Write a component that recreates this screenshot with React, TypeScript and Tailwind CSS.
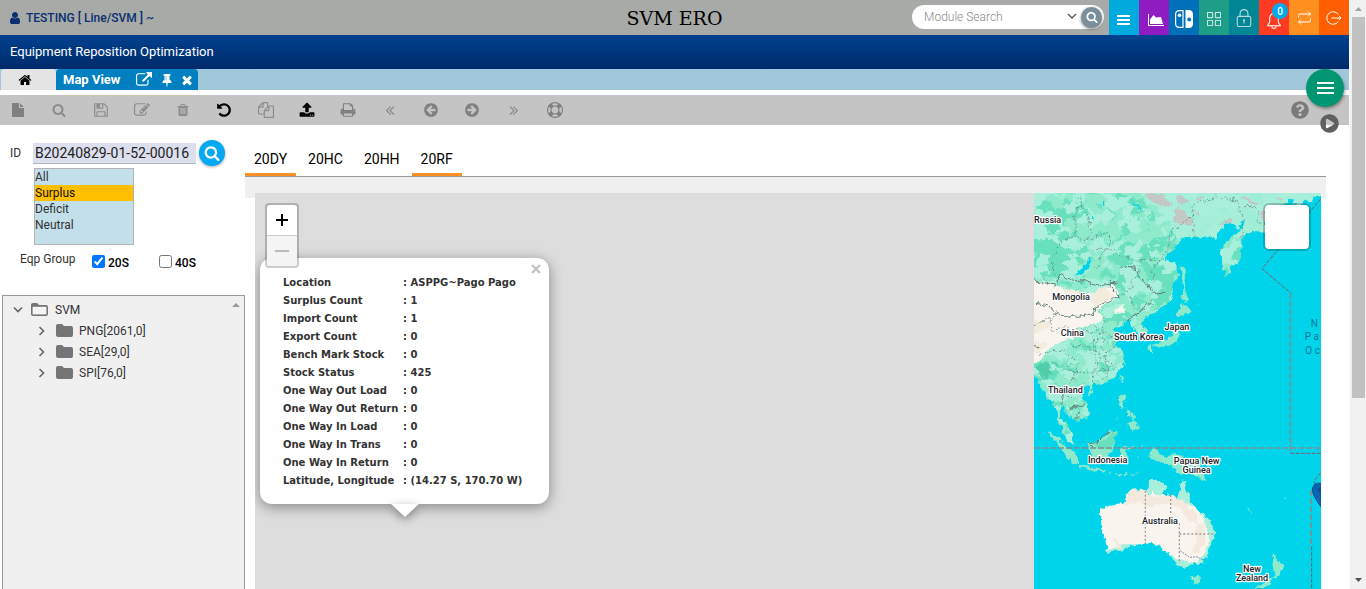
import React from "react";
import { SlGrid, SlLock, SlBell } from "react-icons/sl";
import { FaPlayCircle, FaQuestionCircle } from "react-icons/fa";

const glyphs = {
  user: "M1536 1399q0 109-62.500 187t-150.500 78h-854q-88 0-150.500-78t-62.500-187q0-85 8.500-160.500t31.500-152 58.500-131 94-89 134.500-34.500q131 128 313 128t313-128q76 0 134.500 34.500t94 89 58.500 131 31.500 152 8.500 160.500zm-256-887q0 159-112.500 271.500t-271.500 112.500-271.500-112.500-112.500-271.500 112.500-271.500 271.500-112.500 271.500 112.500 112.500 271.500z",
  home: "M1472 992v480q0 26-19 45t-45 19h-384v-384h-256v384h-384q-26 0-45-19t-19-45v-480q0-1 .5-3t.5-3l575-474 575 474q1 2 1 6zm223-69l-62 74q-8 9-21 11h-3q-13 0-21-7l-692-577-692 577q-12 8-24 7-13-2-21-11l-62-74q-8-10-7-23.500t11-21.500l719-599q32-26 76-26t76 26l244 204v-195q0-14 9-23t23-9h192q14 0 23 9t9 23v408l219 182q10 8 11 21.500t-7 23.500z",
  external: "M1408 928v320q0 119-84.500 203.500t-203.500 84.500h-832q-119 0-203.500-84.500t-84.500-203.500v-832q0-119 84.500-203.500t203.500-84.500h704q14 0 23 9t9 23v64q0 14-9 23t-23 9h-704q-66 0-113 47t-47 113v832q0 66 47 113t113 47h832q66 0 113-47t47-113v-320q0-14 9-23t23-9h64q14 0 23 9t9 23zm384-864v512q0 26-19 45t-45 19-45-19l-176-176-652 652q-10 10-23 10t-23-10l-114-114q-10-10-10-23t10-23l652-652-176-176q-19-19-19-45t19-45 45-19h512q26 0 45 19t19 45z",
  pin: "M800 864v-448q0-14-9-23t-23-9-23 9-9 23v448q0 14 9 23t23 9 23-9 9-23zm672 352q0 26-19 45t-45 19h-429l-51 483q-2 12-10.500 20.500t-20.500 8.500h-1q-27 0-32-27l-76-485h-404q-26 0-45-19t-19-45q0-123 78.500-221.500t177.500-98.500v-512q-52 0-90-38t-38-90 38-90 90-38h640q52 0 90 38t38 90-38 90-90 38v512q99 0 177.500 98.500t78.500 221.500z",
  times: "M1490 1322q0 40-28 68l-136 136q-28 28-68 28t-68-28l-294-294-294 294q-28 28-68 28t-68-28l-136-136q-28-28-28-68t28-68l294-294-294-294q-28-28-28-68t28-68l136-136q28-28 68-28t68 28l294 294 294-294q28-28 68-28t68 28l136 136q28 28 28 68t-28 68l-294 294 294 294q28 28 28 68z",
  file: "M1152 512v-472q22 14 36 28l408 408q14 14 28 36h-472zm-128 32q0 40 28 68t68 28h544v1056q0 40-28 68t-68 28h-1344q-40 0-68-28t-28-68v-1600q0-40 28-68t68-28h800v544z",
  search: "M1216 832q0-185-131.500-316.500t-316.500-131.500-316.500 131.500-131.500 316.500 131.500 316.500 316.500 131.500 316.500-131.500 131.500-316.500zm512 832q0 52-38 90t-90 38q-54 0-90-38l-343-342q-179 124-399 124-143 0-273.500-55.500t-225-150-150-225-55.500-273.500 55.500-273.500 150-225 225-150 273.500-55.500 273.500 55.500 225 150 150 225 55.500 273.500q0 220-124 399l343 343q37 37 37 90z",
  save: "M512 1536h768v-384h-768v384zm896 0h128v-896q0-14-10-38.500t-20-34.500l-281-281q-10-10-34-20t-39-10v416q0 40-28 68t-68 28h-576q-40 0-68-28t-28-68v-416h-128v1280h128v-416q0-40 28-68t68-28h832q40 0 68 28t28 68v416zm-384-928v-320q0-13-9.500-22.500t-22.500-9.500h-192q-13 0-22.500 9.500t-9.500 22.500v320q0 13 9.500 22.500t22.500 9.500h192q13 0 22.500-9.500t9.500-22.500zm640 32v928q0 40-28 68t-68 28h-1344q-40 0-68-28t-28-68v-1344q0-40 28-68t68-28h928q40 0 88 20t76 48l280 280q28 28 48 76t20 88z",
  edit: "M888 1184l116-116-152-152-116 116v56h96v96h56zm440-720q-16-16-33 1l-350 350q-17 17-1 33t33-1l350-350q17-17 1-33zm80 594v190q0 119-84.500 203.500t-203.500 84.500h-832q-119 0-203.500-84.500t-84.500-203.500v-832q0-119 84.500-203.500t203.500-84.500h832q63 0 117 25 15 7 18 23 3 17-9 29l-49 49q-14 14-32 8-23-6-45-6h-832q-66 0-113 47t-47 113v832q0 66 47 113t113 47h832q66 0 113-47t47-113v-126q0-13 9-22l64-64q15-15 35-7t20 29zm-96-738l288 288-672 672h-288v-288zm444 132l-92 92-288-288 92-92q28-28 68-28t68 28l152 152q28 28 28 68t-28 68z",
  trash: "M704 1376v-704q0-14-9-23t-23-9h-64q-14 0-23 9t-9 23v704q0 14 9 23t23 9h64q14 0 23-9t9-23zm256 0v-704q0-14-9-23t-23-9h-64q-14 0-23 9t-9 23v704q0 14 9 23t23 9h64q14 0 23-9t9-23zm256 0v-704q0-14-9-23t-23-9h-64q-14 0-23 9t-9 23v704q0 14 9 23t23 9h64q14 0 23-9t9-23zm-544-992h448l-48-117q-7-9-17-11h-317q-10 2-17 11zm928 32v64q0 14-9 23t-23 9h-96v948q0 83-47 143.500t-113 60.500h-832q-66 0-113-58.500t-47-141.500v-952h-96q-14 0-23-9t-9-23v-64q0-14 9-23t23-9h309l70-167q15-37 54-63t79-26h320q40 0 79 26t54 63l70 167h309q14 0 23 9t9 23z",
  undo: "M1664 896q0 156-61 298t-164 245-245 164-298 61q-172 0-327-72.500t-264-204.500q-7-10-6.500-22.500t8.500-20.500l137-138q10-9 25-9 16 2 23 12 73 95 179 147t225 52q104 0 198.500-40.500t163.500-109.500 109.500-163.500 40.500-198.500-40.500-198.500-109.500-163.500-163.500-109.500-198.500-40.500q-98 0-188 35.500t-160 101.500l137 138q31 30 14 69-17 40-59 40h-448q-26 0-45-19t-19-45v-448q0-42 40-59 39-17 69 14l130 129q107-101 244.500-156.500t284.500-55.500q156 0 298 61t245 164 164 245 61 298z",
  copy: "M1696 384q40 0 68 28t28 68v1216q0 40-28 68t-68 28h-960q-40 0-68-28t-28-68v-288h-544q-40 0-68-28t-28-68v-672q0-40 20-88t48-76l408-408q28-28 76-48t88-20h416q40 0 68 28t28 68v328q68-40 128-40h416zm-544 213l-299 299h299v-299zm-640-384l-299 299h299v-299zm196 647l316-316v-416h-384v416q0 40-28 68t-68 28h-416v640h512v-256q0-40 20-88t48-76zm956 804v-1152h-384v416q0 40-28 68t-68 28h-416v640h896z",
  upload: "M1344 1472q0-26-19-45t-45-19-45 19-19 45 19 45 45 19 45-19 19-45zm256 0q0-26-19-45t-45-19-45 19-19 45 19 45 45 19 45-19 19-45zm128-224v320q0 40-28 68t-68 28h-1472q-40 0-68-28t-28-68v-320q0-40 28-68t68-28h427q21 56 70.500 92t110.500 36h256q61 0 110.500-36t70.500-92h427q40 0 68 28t28 68zm-325-648q-17 40-59 40h-256v448q0 26-19 45t-45 19h-256q-26 0-45-19t-19-45v-448h-256q-42 0-59-40-17-39 14-69l448-448q18-19 45-19t45 19l448 448q31 30 14 69z",
  print: "M448 1536h896v-256h-896v256zm0-640h896v-384h-160q-40 0-68-28t-28-68v-160h-640v640zm1152 64q0-26-19-45t-45-19-45 19-19 45 19 45 45 19 45-19 19-45zm128 0v416q0 13-9.500 22.500t-22.500 9.500h-224v160q0 40-28 68t-68 28h-960q-40 0-68-28t-28-68v-160h-224q-13 0-22.500-9.500t-9.500-22.500v-416q0-79 56.500-135.500t135.500-56.500h64v-544q0-40 28-68t68-28h672q40 0 88 20t76 48l152 152q28 28 48 76t20 88v256h64q79 0 135.500 56.500t56.500 135.500z",
  first: "M1011 1376q0 13-10 23l-50 50q-10 10-23 10t-23-10l-466-466q-10-10-10-23t10-23l466-466q10-10 23-10t23 10l50 50q10 10 10 23t-10 23l-393 393 393 393q10 10 10 23zm384 0q0 13-10 23l-50 50q-10 10-23 10t-23-10l-466-466q-10-10-10-23t10-23l466-466q10-10 23-10t23 10l50 50q10 10 10 23t-10 23l-393 393 393 393q10 10 10 23z",
  prev: "M1408 960v-128q0-26-19-45t-45-19h-502l189-189q19-19 19-45t-19-45l-91-91q-18-18-45-18t-45 18l-362 362-91 91q-18 18-18 45t18 45l91 91 362 362q18 18 45 18t45-18l91-91q18-18 18-45t-18-45l-189-189h502q26 0 45-19t19-45zm256-64q0 209-103 385.500t-279.500 279.500-385.500 103-385.500-103-279.500-279.500-103-385.500 103-385.500 279.500-279.500 385.500-103 385.500 103 279.500 279.500 103 385.500z",
  ring: "M896 0q182 0 348 71t286 191 191 286 71 348-71 348-191 286-286 191-348 71-348-71-286-191-191-286-71-348 71-348 191-286 286-191 348-71zm0 128q-190 0-361 90l194 194q82-28 167-28t167 28l194-194q-171-90-361-90zm-678 1129l194-194q-28-82-28-167t28-167l-194-194q-90 171-90 361t90 361zm678 407q190 0 361-90l-194-194q-82 28-167 28t-167-28l-194 194q171 90 361 90zm0-384q159 0 271.500-112.500t112.500-271.500-112.500-271.500-271.500-112.500-271.500 112.500-112.500 271.500 112.500 271.500 271.500 112.500zm484-217l194 194q90-171 90-361t-90-361l-194 194q28 82 28 167t-28 167z",
};

type GlyphName = keyof typeof glyphs;

function Glyph({ name, className = "" }: { name: GlyphName; className?: string }) {
  return (
    <svg viewBox="0 0 1792 1792" fill="currentColor" aria-hidden="true" className={className}>
      <path d={glyphs[name]} />
    </svg>
  );
}

const tools: { label: string; icon: GlyphName; className: string }[] = [
  { label: "New", icon: "file", className: "size-3.5 text-[#808080]" },
  { label: "Find", icon: "search", className: "size-3.5 text-[#8c8c8c]" },
  { label: "Save", icon: "save", className: "size-4 text-[#8c8c8c]" },
  { label: "Edit", icon: "edit", className: "size-4 text-[#8c8c8c]" },
  { label: "Delete", icon: "trash", className: "size-3.5 text-[#8c8c8c]" },
  { label: "Undo", icon: "undo", className: "size-4 text-black" },
  { label: "Copy", icon: "copy", className: "size-4 text-[#8c8c8c]" },
  { label: "Upload", icon: "upload", className: "size-4 text-black" },
  { label: "Print", icon: "print", className: "size-4 text-[#808080]" },
  { label: "First", icon: "first", className: "size-4 text-[#8c8c8c]" },
  { label: "Previous", icon: "prev", className: "size-4 text-[#808080]" },
  { label: "Next", icon: "prev", className: "size-4 -scale-x-100 text-[#808080]" },
  { label: "Last", icon: "first", className: "size-4 -scale-x-100 text-[#8c8c8c]" },
  { label: "Help", icon: "ring", className: "size-4 text-[#808080]" },
];

function Tile({ label, className, children }: { label: string; className: string; children: React.ReactNode }) {
  return (
    <button type="button" aria-label={label} className={`relative flex w-[30px] items-center justify-center text-white ${className}`}>
      {children}
    </button>
  );
}

function Header() {
  return (
    <header className="flex h-[35px] shrink-0 bg-[#a7aaa6]">
      <div className="flex flex-1 items-center gap-1 pl-2 text-xs font-medium text-[#0a2f73]">
        <Glyph name="user" className="size-3.5" />
        <span>TESTING [ Line/SVM ] ~</span>
      </div>
      <h1 className="flex items-center pt-0.5 pr-2 font-['DejaVu_Serif',serif] text-[19px] text-black">SVM ERO</h1>
      <div className="flex flex-1 justify-end">
        <form className="my-[5px] mr-[5px] flex h-6 w-48 items-center rounded-full bg-white pr-0.5 pl-3">
          <input aria-label="Module Search" placeholder="Module Search" className="min-w-0 flex-1 text-xs font-light outline-none placeholder:text-[#8a8a8a]" />
          <svg viewBox="0 0 10 10" className="mr-1 size-2.5 fill-none stroke-[#555] stroke-[1.3]" aria-hidden="true">
            <path d="M1 2l4 4 4-4" />
          </svg>
          <button type="button" aria-label="Search" className="flex size-[21px] items-center justify-center rounded-full bg-[#7b8f9a] text-white shadow-[0_1px_3px_rgba(0,0,0,.5)]">
            <Glyph name="search" className="size-3" />
          </button>
        </form>
        <Tile label="Menu" className="bg-[#00aadd]">
          <svg viewBox="0 0 14 12" className="mt-1 h-3 w-3.5 fill-white" aria-hidden="true">
            <path d="M0 1h13v2H0zM0 5h13v2H0zM0 9h13v2H0z" />
          </svg>
        </Tile>
        <Tile label="Charts" className="bg-[#8e1cc0]">
          <svg viewBox="0 128 2048 1536" className="mt-1 ml-1 h-3 w-4 fill-white" aria-hidden="true">
            <path d="M2048 1536v128h-2048v-1536h128v1408h1920zm-384-1024l256 896h-1664v-576l448-576 320 320z" />
          </svg>
        </Tile>
        <Tile label="Console" className="bg-[#0070b9]">
          <svg viewBox="0 0 18 18" className="mt-0.5 size-[18px]" aria-hidden="true">
            <path d="M8 .6v16.800H4.500Q.6 17.400.6 13.500V4.500Q.6.6 4.500.6z" fill="none" stroke="white" strokeWidth="1.200" />
            <circle cx="4.500" cy="5.300" r="1.800" fill="white" />
            <path d="M10.500 0h3q4.500 0 4.500 4.500v9q0 4.500-4.500 4.500h-3z" fill="white" />
            <circle cx="14.200" cy="9.500" r="1.900" fill="#0070b9" />
          </svg>
        </Tile>
        <Tile label="Apps" className="bg-[#1f9e87]">
          <SlGrid className="mt-0.5 size-3.5 text-white/90" />
        </Tile>
        <Tile label="Lock" className="bg-[#008694]">
          <SlLock className="size-[18px] text-white/70" />
        </Tile>
        <Tile label="Notifications" className="bg-[#ff3a22]">
          <SlBell className="mt-1.5 size-4" />
          <span className="absolute top-[3px] left-[13px] flex size-4 items-center justify-center rounded-full bg-[#00a8ec] text-[10px] font-medium">0</span>
        </Tile>
        <Tile label="Switch" className="bg-[#ff9020]">
          <svg viewBox="0 0 15 14" className="h-3.5 w-[15px] fill-none stroke-white stroke-1" aria-hidden="true">
            <path d="M1.500 6.500V4.500q0-1.500 1.500-1.500h10.500M11 .5L13.500 3 11 5.500M13.500 7.500v2q0 1.500-1.500 1.500H1.500M4 8.500L1.500 11 4 13.500" />
          </svg>
        </Tile>
        <Tile label="Log out" className="bg-[#ff5f00]">
          <svg viewBox="0 0 16 14" className="h-3.5 w-4 fill-none stroke-white stroke-1" aria-hidden="true">
            <path d="M12.300 3.400A6.300 6.300 0 1 0 12.300 10.600M5.500 7H15M12.800 4.800L15 7l-2.200 2.200" />
          </svg>
        </Tile>
      </div>
    </header>
  );
}

function Toolbar() {
  return (
    <div className="mt-[5px] flex h-[30px] shrink-0 items-center justify-between bg-[#c4c4c4] pr-10 pl-2">
      <div className="flex w-[557px] items-center justify-between">
        {tools.map((t) => (
          <button key={t.label} type="button" aria-label={t.label} className="flex size-5 items-center justify-center">
            <Glyph name={t.icon} className={t.className} />
          </button>
        ))}
      </div>
      <button type="button" aria-label="About">
        <FaQuestionCircle className="size-[18px] text-[#7a7a7a]" />
      </button>
    </div>
  );
}

const folderPath = "M0 3Q0 1 2 1h4l2 2h7q2 0 2 2v7q0 2-2 2H2q-2 0-2-2z";

function TreeRow({ label }: { label: string }) {
  return (
    <li className="flex h-[21px] items-center">
      <svg viewBox="0 0 8 10" className="mr-2.5 h-2.5 w-2 fill-none stroke-[#666] stroke-[1.6]" aria-hidden="true">
        <path d="M1.500 1l4 4-4 4" />
      </svg>
      <svg viewBox="0 0 17 15" className="mr-1.5 h-[15px] w-[17px] fill-[#757575]" aria-hidden="true">
        <path d={folderPath} />
      </svg>
      {label}
    </li>
  );
}

function SidePanel() {
  return (
    <aside className="flex w-[245px] shrink-0 flex-col text-xs text-[#333]">
      <div className="flex items-center pt-[15px]">
        <label htmlFor="run-id" className="w-[33px] pl-2.5">ID</label>
        <input id="run-id" defaultValue="B20240829-01-52-00016" className="h-[21px] w-[163px] border-b border-[#b5b5bd] bg-[#dcdfee] px-0.5 text-sm text-[#222] outline-none" />
        <button type="button" aria-label="Look up" className="ml-[3px] flex size-[26px] items-center justify-center rounded-full bg-[#03a9f4] text-white shadow-[0_1px_3px_rgba(0,0,0,.35)]">
          <Glyph name="search" className="size-4" />
        </button>
      </div>
      <select multiple size={4} defaultValue={["Surplus"]} aria-label="Stock status" className="mt-[2px] ml-[34px] h-[77px] w-[100px] overflow-hidden border border-[#b4b4b4] bg-[#c2dfea] text-xs text-[#333] outline-none">
        {["All", "Surplus", "Deficit", "Neutral"].map((o) => (
          <option key={o} className="h-4 px-0 pt-px pb-0 leading-4 checked:bg-[linear-gradient(#ffbf00,#ffbf00)]">{o}</option>
        ))}
      </select>
      <div className="flex h-[50px] items-start pt-1.5 pl-5">
        <span className="w-[72px]">Eqp Group</span>
        <label className="flex w-[67px] items-center gap-[3px] font-medium text-black">
          <input type="checkbox" defaultChecked className="size-[13px] accent-[#0075ff]" />
          <span className="pt-1">20S</span>
        </label>
        <label className="flex items-center gap-[3px] font-medium text-black">
          <input type="checkbox" className="size-[13px]" />
          <span className="pt-1">40S</span>
        </label>
      </div>
      <div className="ml-0.5 flex flex-1 justify-between border border-b-0 border-[#9a9a9a] bg-[#f0f0f0] pt-[3px] pr-1 pl-2.5">
        <ul>
          <li>
            <div className="flex h-[21px] items-center">
              <svg viewBox="0 0 10 8" className="mr-2 h-2 w-2.5 fill-none stroke-[#666] stroke-[1.6]" aria-hidden="true">
                <path d="M1 1.500l4 4 4-4" />
              </svg>
              <svg viewBox="0 0 17 15" className="mr-[7px] h-[15px] w-[17px]" aria-hidden="true">
                <path d={folderPath} fill="#757575" />
                <path d="M1.600 4.800h13.800v7.600H1.600z" fill="#f5f5f5" />
              </svg>
              SVM
            </div>
            <ul className="pl-[25px]">
              <TreeRow label="PNG[2061,0]" />
              <TreeRow label="SEA[29,0]" />
              <TreeRow label="SPI[76,0]" />
            </ul>
          </li>
        </ul>
        <svg viewBox="0 0 8 4" className="mt-1 h-1 w-2 fill-[#9a9a9a]" aria-hidden="true">
          <path d="M0 4l4-4 4 4z" />
        </svg>
      </div>
    </aside>
  );
}

const mapLabels = [
  { t: "Russia", x: 53, y: 159 },
  { t: "Mongolia", x: 123, y: 390 },
  { t: "China", x: 127, y: 498 },
  { t: "Japan", x: 441, y: 480 },
  { t: "South Korea", x: 326, y: 510 },
  { t: "Thailand", x: 106, y: 669 },
  { t: "Indonesia", x: 233, y: 879 },
  { t: "Papua New", x: 500, y: 882 },
  { t: "Guinea", x: 500, y: 909 },
  { t: "Australia", x: 390, y: 1062 },
  { t: "New", x: 666, y: 1205 },
  { t: "Zealand", x: 666, y: 1233 },
];

const asia =
  "M0 50H890V72L850 80 842 96 826 92 815 100 790 100 785 80 770 100 740 108 705 110V185L680 180 660 190 645 188 640 205 632 222 636 250 622 280 606 292 598 308 582 322 578 295 573 270 573 240 590 215 610 200 625 186 640 168 646 148 634 150 624 180 606 158 592 160 575 175 560 205 535 197 512 202 490 199 465 202 452 212 430 240 400 270 418 276 432 280 443 292 444 318 432 350 430 370 412 400 398 412 380 425 362 430 350 440 335 455 330 465 348 480 354 500 342 510 325 498 315 474 300 462 312 452 290 450 282 464 268 464 250 480 264 490 286 490 268 508 257 520 275 545 284 552 282 576 268 600 246 625 240 635 215 642 190 645 180 662 172 645 160 652 150 658 155 680 172 705 176 735 160 745 142 760 135 745 116 738 100 712 90 715 90 750 112 765 126 795 130 822 112 812 96 775 85 752 80 720 70 690 50 695 42 672 25 635 0 600Z";

const australia =
  "M214 1030L213 1018 250 1005 280 1002 292 982 288 976 305 960 330 955 345 962 355 942 365 932 410 942 402 968 425 980 444 985 452 950 458 927 466 950 475 970 484 995 505 1020 535 1043 545 1060 553 1085 548 1115 535 1145 524 1170 520 1182 495 1182 470 1192 445 1186 425 1170 418 1145 405 1150 395 1135 365 1118 335 1122 305 1128 290 1140 255 1143 242 1152 226 1145 230 1125 225 1105 214 1075Z";

function WorldMap() {
  return (
    <svg viewBox="12 69 861 1188" preserveAspectRatio="xMinYMin slice" role="img" aria-label="World map" className="h-[396px] w-[287px] shrink-0 bg-[#00d4ea]">
      <defs>
        <clipPath id="asia-land"><path d={asia} /></clipPath>
        <clipPath id="australia-land"><path d={australia} /></clipPath>
        <filter id="coast" filterUnits="userSpaceOnUse" x="-20" y="40" width="920" height="1240">
          <feTurbulence type="fractalNoise" baseFrequency="0.05" numOctaves="3" seed="4" result="n" />
          <feDisplacementMap in="SourceGraphic" in2="n" scale="22" xChannelSelector="R" yChannelSelector="G" />
        </filter>
        <filter id="lowland" filterUnits="userSpaceOnUse" x="0" y="40" width="900" height="820" colorInterpolationFilters="sRGB">
          <feTurbulence type="fractalNoise" baseFrequency="0.018 0.024" numOctaves="4" seed="7" />
          <feColorMatrix values="0 0 0 0 0.66  0 0 0 0 0.94  0 0 0 0 0.86  30 0 0 0 -15.500" />
        </filter>
        <filter id="forest" filterUnits="userSpaceOnUse" x="0" y="40" width="900" height="820" colorInterpolationFilters="sRGB">
          <feTurbulence type="fractalNoise" baseFrequency="0.02 0.026" numOctaves="4" seed="21" />
          <feColorMatrix values="0 0 0 0 0.42  0 0 0 0 0.88  0 0 0 0 0.75  30 0 0 0 -17" />
        </filter>
      </defs>
      <g filter="url(#coast)">
        <path d={asia} fill="#8feacb" />
        <g clipPath="url(#asia-land)">
          <g fill="#68e0bd">
            <path d="M0 170l72-50 30 20 10 60 60 30-10 50-50 10-30 40-30-12-52 20z" />
            <path d="M0 90l42-10 20 20-20 30-42 5z" />
            <path d="M230 235l60-22 60 10 60-40 10 30-40 50-60 14-40-10-40 12z" />
            <path d="M0 580l52-8 40 38-30 30-62-10z" />
            <path d="M345 290l40-10 45 20 5 60-45 50-25-10 20-50-30-20z" />
            <path d="M265 295l60 5 10 30-40-10-10 60-20-40z" />
            <path d="M60 120l90-20 40 20-30 30-60-4z" />
          </g>
          <rect x="0" y="40" width="900" height="820" filter="url(#forest)" />
          <rect x="0" y="40" width="900" height="820" filter="url(#lowland)" />
          <path d="M330 50H890V200H560L470 205 420 180 440 130 380 110 345 95Z" fill="#a9efdb" opacity=".85" />
          <g fill="#f9f4ee">
            <path d="M0 340l42-7 28 12 30 14 70 10 40-2 40-24 14 22 0 20-26 10-36 30 20 20-30 20-50 10-10 32-30 2-30 20-24 14-14 30-34 6z" />
            <path d="M250 420l30-12 5 18-30 6z" />
          </g>
          <g fill="#f4ebdf">
            <path d="M100 350l70 22 60-20 20 30-50 20-40-20-50-12z" />
            <path d="M0 440l42 20 20-12-10 30-52 10zM0 520l42-10 16 16-30 20-28-2z" />
          </g>
          <g fill="#c2c9c5">
            <path d="M430 120l20-8 26 30 14 14-10 12-50-14 8-14z" />
            <path d="M345 72l50-3 10 22 20 10-10 12-60-20zM440 78l20 2 24 14-20 8-22-6zM500 80l30 0-20 14z" />
            <path d="M570 160l30-16 16 4-20 18zM640 78l30 12 20 16-20-2-30-14zM690 130l15-10v40z" />
            <path d="M490 120l20 10-12 8zM742 80l20 10-14 4z" />
          </g>
          <g fill="#3fbf9f" opacity=".6">
            <path d="M20 590l22-12 24 10-10 10 24 14-30 2-20 14 0-18zM30 612l20-4 4 16-20 6zM64 570l20 10-10 10z" />
          </g>
          <g fill="#00d4ea">
            <path d="M182 260l-2 26-22 24-24 8 22-24 14-12 4-20zM306 92l34 32-6-2-24-20zM185 128l8 22-8-8zM220 90l8 10-10 2z" />
          </g>
        </g>
        <g fill="#8feacb">
          <path d="M452 290l14 0 2 30-4 30 8 36-6 12-8-12 2-30-4-30z" />
          <path d="M454 402l14 2 16 18-18 12-22 8-6-6 12-12zM440 455l10 20-4 36-22 14-38 8-14-10 34-10 20-20zM352 532l16-8 2 12-10 16z" />
          <path d="M502 402l4-2 0 6zM275 620l6 0-4 16-6-4z" />
          <path d="M270 678l14-6 4 8-10 20 2 16-10-12zM176 662l14 0-4 12-12 0zM288 718l12 8 0 14-8-4zM302 726l14 10-6 14-8-8zM290 762l18-14 14 12 0 18-14 4-6-14zM256 752l12-14-6 10z" />
          <path d="M55 786l16 6 30 30 30 26 16 12 0 26-18-8-30-30-20-34-24-22zM147 888l40 2 40 14-2 4-50-8-28-6z" />
          <path d="M174 820l24 0 20-14 22-28 20 12-10 14 6 22-14 20-14 24-36-6-14-14z" />
          <path d="M272 832l40-6 0 8-30 6 12 20-12 4-8 10-6-6 4-20zM236 908l12 0-4 6zM256 910l20-2-8 6zM300 918l28-14-16 12zM280 912l14 0-8 4zM335 824l6 0-2 10zM322 860l8 0-4 4zM350 858l30 0-10 4z" />
          <path d="M362 840l22-2 6 14 20 12 20-14 50 16 32 20 4 20 10 20-16 0-30-20-20 6-26 0 6-14-40-20-24-10-14-4zM522 880l26-4 14 4-20 10zM566 860l10 10-8-2zM500 912l24 4-2 6z" />
          <path d="M646 1012l18 14-2 2zM760 986l6 0-2 6z" />
          <path d="M480 1218l30 0-6 22-12 4zM722 1152l14 8 12 24 16 2-10 18-12 20-12-2 6-18-10-12 2-12zM690 1248l30-22 10 0-8 16-26 15h-30z" />
        </g>
        <path d="M225 815l20-28 12 6-8 28-10 20-40-10-12-14z" fill="#68e0bd" />
        <path d={australia} fill="#a9efdb" />
        <g clipPath="url(#australia-land)">
          <path d="M210 1020l70-20 10-20 20-18 30 0 15 20 20-20 35 10 14 8 60 30 20 0 20 40 16 60-20 40-20 30-40-6-20-6-40-25-70-20-60 0-40 20-30-10-6-40z" fill="#f9f4ee" />
          <path d="M300 968l40-12 12 20 30 4 30-8 60 30 10 20 20 10 0 30-24-10-30-40-40-12-50 10-30-14-50 10zM494 1060l30 0 2 60-20 30-24-6 20-30zM250 1100l20 26 0 14-20-26z" fill="#f4e9dc" />
        </g>
        <path d="M370 952l30 6 4 12-26 6z" fill="#a9efdb" />
      </g>
      <g fill="none" stroke="#5e7c78" strokeWidth="3" filter="url(#coast)">
        <path d="M0 335l48 4 34 8 6-36 26 14 62 12 34 10 28-4 30-6M18 400l36 8 20 22 64 12 52-12 14-24 32-12 34-16-30-26 4-22M270 298l14-6 30 2 12 26 30 22 10 26 30 4 12-12M364 398l-30 24-40 30M12 530l20 4M118 720l26-14 18 0M130 690l-30-20 4-14M80 655l20 22-10 30M140 745l6-20M190 832l-12-12 24-2 12-12 8-16 26-4" />
      </g>
      <g fill="none" stroke="#55716d" strokeWidth="2.500" strokeDasharray="7 5" opacity=".8" filter="url(#coast)">
        <path d="M155 69l-4 40 24 20 8 56-8 22-40-6 0-70 16-22M72 318l-4-48 20-50 26-18 26 0M175 207l60-20 8 30-30 36-12 40M175 240l69-4 60 34 90-2 20-28 6-50 62-50 10-40 60-14 10-30" />
        <path d="M484 130l10 70M560 80l60 10 18 50-2 60M630 110l50 0 10 50M394 268l-30 30 6 40M320 310l-26 54-36 22M300 380l20 40" />
        <path d="M12 470l50-30 4 40 60-6 40 6 30 10-10 40 30 30-20 40 20 30M30 550l70-10 30 20-20 20 30 60M60 460l20-40M190 470l20 20 50 10M100 600l80 10 70-20M200 500l-10 140M150 580l-30 60M225 440l-10 60 20 130M250 530l-30 30 40 30M110 530l50-4 30 20" />
      </g>
      <path d="M450 1142l30 20 20-2 20 10" fill="none" stroke="#557" strokeWidth="2" strokeDasharray="6 3" />
      <g fill="none" stroke="#9a9a9f" strokeWidth="4" strokeDasharray="6 6">
        <path d="M346 962v160M422 975v60M448 1060v120M448 1092h102" />
      </g>
      <g fill="none" stroke="#7c8f98" strokeWidth="5" strokeDasharray="18 6">
        <path d="M12 834H873M781 368V850M843 960V1130" />
      </g>
      <g fill="none" stroke="#75606c" strokeWidth="3" strokeDasharray="12 4">
        <path d="M873 86L696 296 781 368M781 850H873M873 908L854 930V948M845 1130V1257" />
      </g>
      <path d="M873 940q-24-4-26 20 2 20 26 50z" fill="#0a66b5" stroke="#0b4f92" strokeWidth="3" />
      <path d="M873 952q-10 0-10 9 2 8 10 8z" fill="#0a4f92" />
      <g className="fill-[#0e7892] font-['Roboto',sans-serif] text-[30px]">
        <text x="842" y="472">N</text>
        <text x="824" y="510">P a</text>
        <text x="826" y="552">O c</text>
      </g>
      <g className="fill-[#1c2127] stroke-white font-['Roboto',sans-serif] text-[27px] font-medium" strokeWidth="7" strokeLinejoin="round" paintOrder="stroke" textAnchor="middle">
        {mapLabels.map((l) => (
          <text key={l.t} x={l.x} y={l.y}>{l.t}</text>
        ))}
      </g>
    </svg>
  );
}

const details = [
  ["Location", "ASPPG~Pago Pago"],
  ["Surplus Count", "1"],
  ["Import Count", "1"],
  ["Export Count", "0"],
  ["Bench Mark Stock", "0"],
  ["Stock Status", "425"],
  ["One Way Out Load", "0"],
  ["One Way Out Return", "0"],
  ["One Way In Load", "0"],
  ["One Way In Trans", "0"],
  ["One Way In Return", "0"],
  ["Latitude, Longitude", "(14.27 S, 170.70 W)"],
];

function Popup() {
  return (
    <div className="absolute top-[65px] left-[5px] w-[289px]">
      <div className="relative rounded-xl bg-white pt-4 pb-3.5 pl-[23px] shadow-[0_3px_14px_rgba(0,0,0,.4)]">
        <button type="button" aria-label="Close" className="absolute top-1.5 right-2 text-[#c3c3c3]">
          <svg viewBox="0 0 10 10" className="size-2.5 stroke-current stroke-[2.4]" aria-hidden="true">
            <path d="M1 1l8 8M9 1l-8 8" />
          </svg>
        </button>
        <table className="font-['DejaVu_Sans',sans-serif] text-[10px] leading-[18px] font-bold whitespace-nowrap text-[#333]">
          <tbody>
            {details.map(([k, v]) => (
              <tr key={k}>
                <th scope="row" className="w-[120px] p-0 text-left">{k}</th>
                <td className="p-0">: {v}</td>
              </tr>
            ))}
          </tbody>
        </table>
      </div>
      <svg viewBox="0 0 28 13" className="relative mx-auto h-[13px] w-7 overflow-visible fill-white drop-shadow-[0_3px_5px_rgba(0,0,0,.4)]" aria-hidden="true">
        <path d="M0 0h28L14 13z" />
      </svg>
    </div>
  );
}

function MapPanel() {
  return (
    <main className="mr-[23px] flex min-w-0 flex-1 flex-col pt-[17px]">
      <div role="tablist" className="flex h-[35px] gap-[3px] border-b border-[#999] text-sm text-black">
        {["20DY", "20HC", "20HH", "20RF"].map((t) => (
          <button
            key={t}
            type="button"
            role="tab"
            aria-selected={t === "20DY"}
            className={`border-b-[3px] px-[9px] pt-0.5 ${t === "20DY" || t === "20RF" ? "border-[#ff9126]" : "border-transparent"}`}
          >
            {t}
          </button>
        ))}
      </div>
      <div className="flex min-h-0 flex-1 bg-[linear-gradient(#f0f0f0,#f0f0f0)] bg-[length:100%_21px] bg-no-repeat pt-4 pr-[5px] pl-2.5">
        <div className="relative flex min-w-0 flex-1 justify-end overflow-hidden bg-[#dddddd]">
          <WorldMap />
          <Popup />
          <div className="absolute top-2.5 left-2.5 flex flex-col rounded border-2 border-black/20 bg-clip-padding">
            <button type="button" aria-label="Zoom in" className="flex size-[30px] items-center justify-center rounded-t-sm bg-white">
              <svg viewBox="0 0 12 12" className="size-3 stroke-black stroke-2" aria-hidden="true">
                <path d="M0 6h12M6 0v12" />
              </svg>
            </button>
            <button type="button" aria-label="Zoom out" disabled className="flex h-[31px] w-[30px] items-center justify-center rounded-b-sm border-t border-[#ccc] bg-[#f4f4f4]">
              <svg viewBox="0 0 14 2" className="h-0.5 w-3.5 fill-[#bbb]" aria-hidden="true">
                <path d="M0 0h14v2H0z" />
              </svg>
            </button>
          </div>
          <button type="button" aria-label="Layers" className="absolute top-2.5 right-2.5 size-12 rounded-md border-2 border-black/20 bg-white bg-clip-padding" />
        </div>
      </div>
    </main>
  );
}

function ScrollRail() {
  return (
    <div className="flex w-[17px] shrink-0 flex-col items-center border-l border-[#fafafa] bg-[#f1f1f1]" aria-hidden="true">
      <svg viewBox="0 0 17 17" className="size-[17px] fill-[#a3a3a3]"><path d="M5 11h7L8.500 7z" /></svg>
      <div className="h-[381px] w-[13px] bg-[#c1c1c1]" />
      <svg viewBox="0 0 17 17" className="mt-auto size-[17px] fill-[#505050]"><path d="M5 6h7l-3.500 4z" /></svg>
    </div>
  );
}

export default function App() {
  return (
    <div className="flex h-screen overflow-hidden bg-white font-['Roboto',sans-serif]">
      <div className="relative flex min-w-0 flex-1 flex-col">
        <Header />
        <div className="flex h-[34px] shrink-0 items-center bg-linear-to-b from-[#00428f] to-[#002a6b] pl-2.5 text-[13px] text-white">
          Equipment Reposition Optimization
        </div>
        <nav className="flex h-[21px] shrink-0 bg-[#a0c8da] text-[13px]">
          <a href="#home" aria-label="Home" className="ml-px flex w-[55px] items-center justify-center rounded-t bg-[#e4e4e4] pr-2">
            <Glyph name="home" className="size-3.5 text-black" />
          </a>
          <div className="flex items-center rounded-t bg-[#0080c0] pr-1 pl-[7px] font-bold text-white">
            <a href="#map" className="mr-4">Map View</a>
            <button type="button" aria-label="Open in new window" className="mr-2"><Glyph name="external" className="size-4" /></button>
            <button type="button" aria-label="Pin tab" className="mr-1.5"><Glyph name="pin" className="size-3.5" /></button>
            <button type="button" aria-label="Close tab"><Glyph name="times" className="size-3.5" /></button>
          </div>
        </nav>
        <Toolbar />
        <div className="flex min-h-0 flex-1">
          <SidePanel />
          <MapPanel />
        </div>
        <button type="button" aria-label="Quick actions" className="absolute top-[69px] right-[5px] flex size-[38px] items-center justify-center rounded-full bg-[#009671] shadow-[1px_2px_3px_rgba(0,0,0,.35)]">
          <svg viewBox="0 0 17 12" className="h-3 w-[17px] fill-white" aria-hidden="true">
            <path d="M0 0h17v2H0zM0 5h17v2H0zM0 10h17v2H0z" />
          </svg>
        </button>
        <button type="button" aria-label="Play" className="absolute top-[114px] right-2.5">
          <FaPlayCircle className="size-[19px] text-[#606060]" />
        </button>
      </div>
      <ScrollRail />
    </div>
  );
}
